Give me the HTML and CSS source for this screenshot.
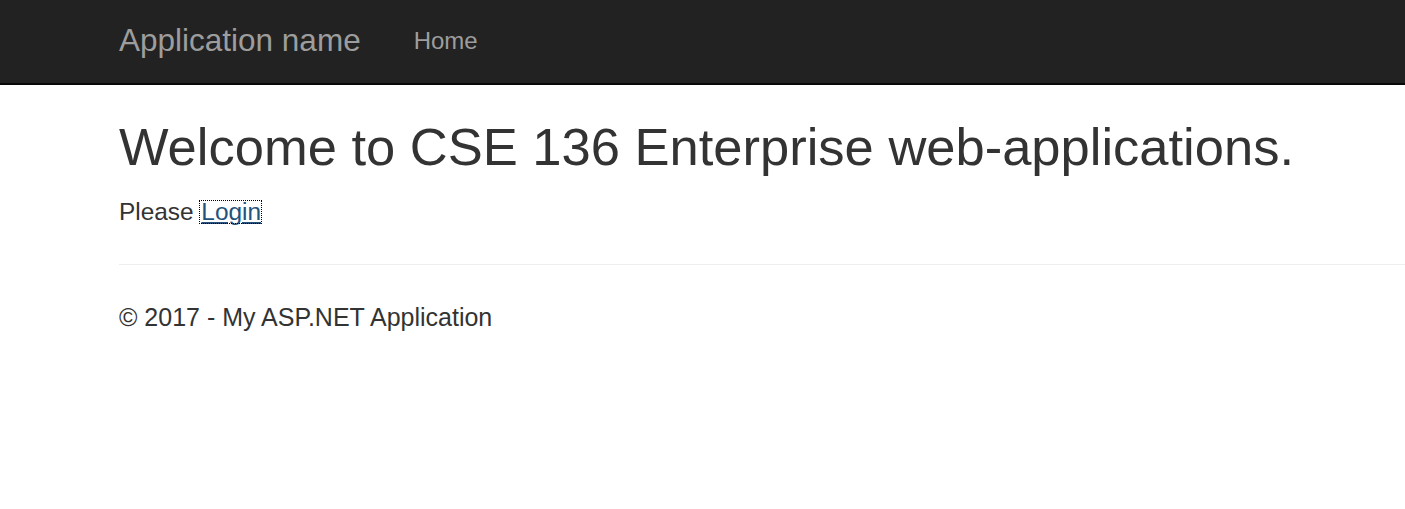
FILE: index.html
```html
<!DOCTYPE html>
<html>
<head>
<meta charset="utf-8">
<title>Home Page - My ASP.NET Application</title>
<link rel="stylesheet" href="styles.css">
</head>
<body>
<div class="navbar">
  <a class="brand" href="#">Application name</a>
  <a class="nav-link" href="#">Home</a>
</div>
<div class="body-content">
  <h2 class="title">Welcome to CSE 136 Enterprise web-applications.</h2>
  <p class="lead-text">Please <a class="login" href="#">Login</a></p>
  <hr class="rule">
  <footer class="footer">
    <p>&copy; 2017 - My ASP.NET Application</p>
  </footer>
</div>
</body>
</html>
```
FILE: styles.css
```css
html, body {
  margin: 0;
  padding: 0;
  background: #fff;
}
body {
  font-family: "Liberation Sans", Arial, sans-serif;
  color: #333;
  font-size: 25px;
  line-height: 35px;
}
.navbar {
  box-sizing: border-box;
  height: 85px;
  background: #222;
  border-bottom: 2px solid #080808;
  display: flex;
  align-items: center;
  padding: 0 0 2px 119px;
}
.brand {
  font-size: 31.5px;
  line-height: 35px;
  color: #9d9d9d;
  text-decoration: none;
}
.nav-link {
  margin-left: 53px;
  font-size: 24px;
  line-height: 30px;
  color: #9d9d9d;
  text-decoration: none;
}
.body-content {
  padding-left: 119px;
}
.title {
  margin: 33px 0 0;
  font-size: 52.5px;
  font-weight: 500;
  line-height: 1.1;
}
.lead-text {
  margin: 19px 0 0;
  font-size: 24.4px;
  line-height: 34px;
}
.login {
  display: inline-block;
  line-height: 22px;
  padding-left: 1px;
  color: #23527c;
  text-decoration: underline;
  outline: 1px dotted #000;
  outline-offset: 0;
}
.rule {
  margin: 35px 0 0;
  border: 0;
  border-top: 1px solid #eee;
  height: 0;
}
.footer p {
  margin: 35px 0 0;
}
```
